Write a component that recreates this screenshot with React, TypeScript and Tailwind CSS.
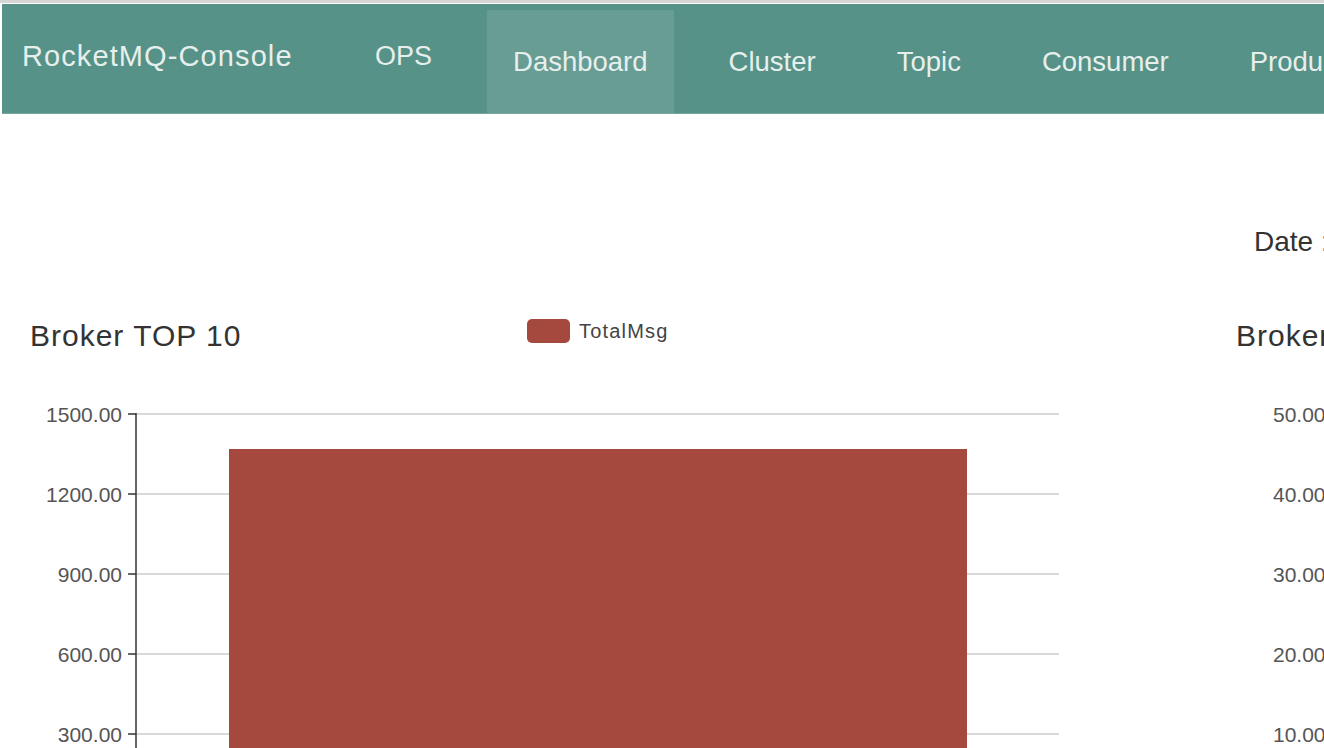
import React from 'react';

const navItems = ['Dashboard', 'Cluster', 'Topic', 'Consumer', 'Producer', 'Message', 'Tools'];
const font = { fontFamily: '"Liberation Sans", Arial, sans-serif' };

const leftTicks = [
  { label: '1500.00', y: 34 },
  { label: '1200.00', y: 114 },
  { label: '900.00', y: 194 },
  { label: '600.00', y: 274 },
  { label: '300.00', y: 354 },
];

const rightTicks = [
  { label: '50.00', y: 34 },
  { label: '40.00', y: 114 },
  { label: '30.00', y: 194 },
  { label: '20.00', y: 274 },
  { label: '10.00', y: 354 },
];

export default function App() {
  return (
    <div className="w-[1324px] h-[748px] overflow-hidden bg-white" style={font}>
      <div className="h-[3px] bg-[#d6d6d6]" />
      <div className="h-[1px] bg-white" />

      {/* Navbar */}
      <nav className="ml-[2px] w-[2400px] h-[110px] bg-[#569287] border-b border-[#78a69e] flex text-[#e7efed]">
        <div className="pl-[20px] w-[347px] shrink-0 flex items-center pb-[3px] text-[29px] tracking-[1.1px] whitespace-nowrap">
          RocketMQ-Console
        </div>
        <div className="flex gap-[29px] pt-[6px] shrink-0">
          <div className="px-[26px] flex items-center pb-[4px] -mt-[6px] text-[27px]">OPS</div>
          {navItems.map((item) => (
            <div
              key={item}
              className={
                item === 'Dashboard'
                  ? 'px-[26px] shrink-0 flex items-center text-[27.5px] whitespace-nowrap bg-[#689d94]'
                  : 'px-[26px] shrink-0 flex items-center text-[27.5px] whitespace-nowrap'
              }
            >
              {item}
            </div>
          ))}
        </div>
      </nav>

      {/* Content */}
      <div className="flex">
        <div className="w-[1236px] shrink-0">
          <div className="h-[203px]" />
          <div className="flex items-center h-[36px]">
            <div className="pl-[30px] w-[527px] text-[30px] tracking-[1px] text-[#333]">Broker TOP 10</div>
            <div className="flex items-center gap-[9px] -mt-[8px]">
              <div className="w-[43px] h-[24px] rounded-[5px] bg-[#a5493f]" />
              <span className="text-[20px] tracking-[1.2px] text-[#444]">TotalMsg</span>
            </div>
          </div>
          <svg width="1100" height="368" className="mt-[27px] block">
            {leftTicks.map((t) => (
              <g key={t.label}>
                <line x1="136" y1={t.y} x2="1059" y2={t.y} stroke="#cccccc" strokeWidth="1.5" />
                <line x1="128" y1={t.y} x2="136" y2={t.y} stroke="#333" strokeWidth="1.5" />
                <text
                  x="122"
                  y={t.y}
                  textAnchor="end"
                  dominantBaseline="central"
                  fontSize="21"
                  fill="#555"
                  fontFamily='"Liberation Sans", Arial, sans-serif'
                >
                  {t.label}
                </text>
              </g>
            ))}
            <line x1="136" y1="33" x2="136" y2="368" stroke="#333" strokeWidth="1.5" />
            <rect x="229" y="69" width="738" height="320" fill="#a5493f" />
          </svg>
        </div>

        <div className="flex-1">
          <div className="h-[110px]" />
          <div className="ml-[18px] h-[36px] flex items-center text-[28px] text-[#333] whitespace-nowrap">
            Date :
          </div>
          <div className="h-[57px]" />
          <div className="h-[36px] flex items-center text-[30px] tracking-[1px] text-[#333] whitespace-nowrap">
            Broker TOP 10
          </div>
          <svg width="200" height="368" className="mt-[27px] block">
            {rightTicks.map((t) => (
              <text
                key={t.label}
                x="37"
                y={t.y}
                dominantBaseline="central"
                fontSize="21"
                fill="#555"
                fontFamily='"Liberation Sans", Arial, sans-serif'
              >
                {t.label}
              </text>
            ))}
          </svg>
        </div>
      </div>
    </div>
  );
}
